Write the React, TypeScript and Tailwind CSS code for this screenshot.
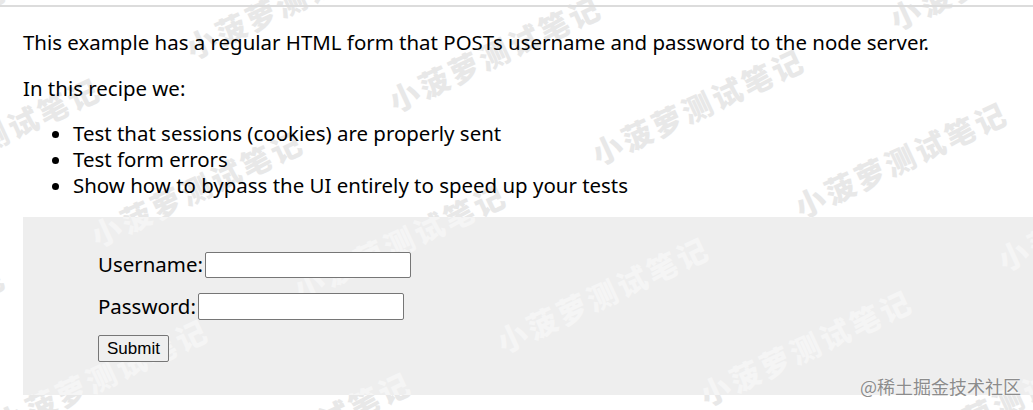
import type { CSSProperties } from 'react';

const MARK = '小菠萝测试笔记';

// watermark lattice: start of "小" for each stamp, step A along a row, step B to the next row
const A = { x: 203, y: 53 };
const B = { x: -95, y: 188 };
const ORIGIN = { x: 195, y: 45 };

const marks: { x: number; y: number }[] = [];
for (let r = -2; r <= 3; r++) {
  for (let c = -2; c <= 6; c++) {
    const x = ORIGIN.x + c * A.x + r * B.x;
    const y = ORIGIN.y + c * A.y + r * B.y;
    if (x > -260 && x < 1040 && y > -60 && y < 520) marks.push({ x, y });
  }
}

function Watermarks({ dx = 0, dy = 0, tone }: { dx?: number; dy?: number; tone: string }) {
  return (
    <div className="pointer-events-none absolute inset-0 overflow-hidden select-none">
      {marks.map((m, i) => {
        const style: CSSProperties = {
          left: m.x + 97 - dx,
          top: m.y - 45 - dy,
        };
        return (
          <span
            key={i}
            style={style}
            className={`absolute -translate-x-1/2 -translate-y-1/2 -rotate-[25deg] whitespace-nowrap font-['Noto_Sans_CJK_SC',sans-serif] text-[30px] font-black tracking-[3px] ${tone}`}
          >
            {MARK}
          </span>
        );
      })}
    </div>
  );
}

export default function App() {
  return (
    <div className="relative h-[410px] w-[1033px] overflow-hidden bg-white font-['Noto_Sans','Noto_Sans_CJK_SC',sans-serif] text-black">
      <Watermarks tone="text-[#e8e8e8]" />
      <div className="relative mt-[5px] border-t-2 border-[#dcdcdc] pl-[23px] pt-[22px]">
        <p className="text-[20.45px] leading-[26px]">
          This example has a regular HTML form that POSTs username and password to the node server.
        </p>
        <p className="mt-[20px] text-[20.45px] leading-[26px]">In this recipe we:</p>
        <ul className="mt-[19px] list-disc pl-[50px] text-[20.45px] leading-[26px]">
          <li>Test that sessions (cookies) are properly sent</li>
          <li>Test form errors</li>
          <li>Show how to bypass the UI entirely to speed up your tests</li>
        </ul>

        <div className="relative mt-[19px] h-[178px] overflow-hidden bg-[#eeeeee]">
          <Watermarks dx={23} dy={217} tone="text-[#f5f5f5]" />
          <form
            className="relative flex flex-col gap-[15px] pl-[75px] pt-[34px]"
            onSubmit={(e) => e.preventDefault()}
          >
            <div className="flex h-[27px] items-center gap-[2px] text-[20.45px]">
              <label htmlFor="username">Username:</label>
              <input
                id="username"
                type="text"
                className="h-[26px] w-[206px] rounded-[2px] border border-[#767676] bg-white"
              />
            </div>
            <div className="flex h-[27px] items-center gap-[2px] text-[20.45px]">
              <label htmlFor="password">Password:</label>
              <input
                id="password"
                type="password"
                className="h-[27px] w-[206px] rounded-[2px] border border-[#767676] bg-white"
              />
            </div>
            <div className="flex h-[27px] items-center">
              <button
                type="submit"
                className="h-[27px] rounded-[2px] border border-[#767676] bg-[#efefef] px-[8px] font-['Liberation_Sans',Arial,sans-serif] text-[17px] leading-none text-black"
              >
                Submit
              </button>
            </div>
          </form>
        </div>
      </div>
      <span className="absolute bottom-[15px] right-[12px] font-['Noto_Sans_CJK_SC',sans-serif] text-[18px] leading-none text-[#8c8c8c] [text-shadow:0_0_2px_#fff]">
        @稀土掘金技术社区
      </span>
    </div>
  );
}
